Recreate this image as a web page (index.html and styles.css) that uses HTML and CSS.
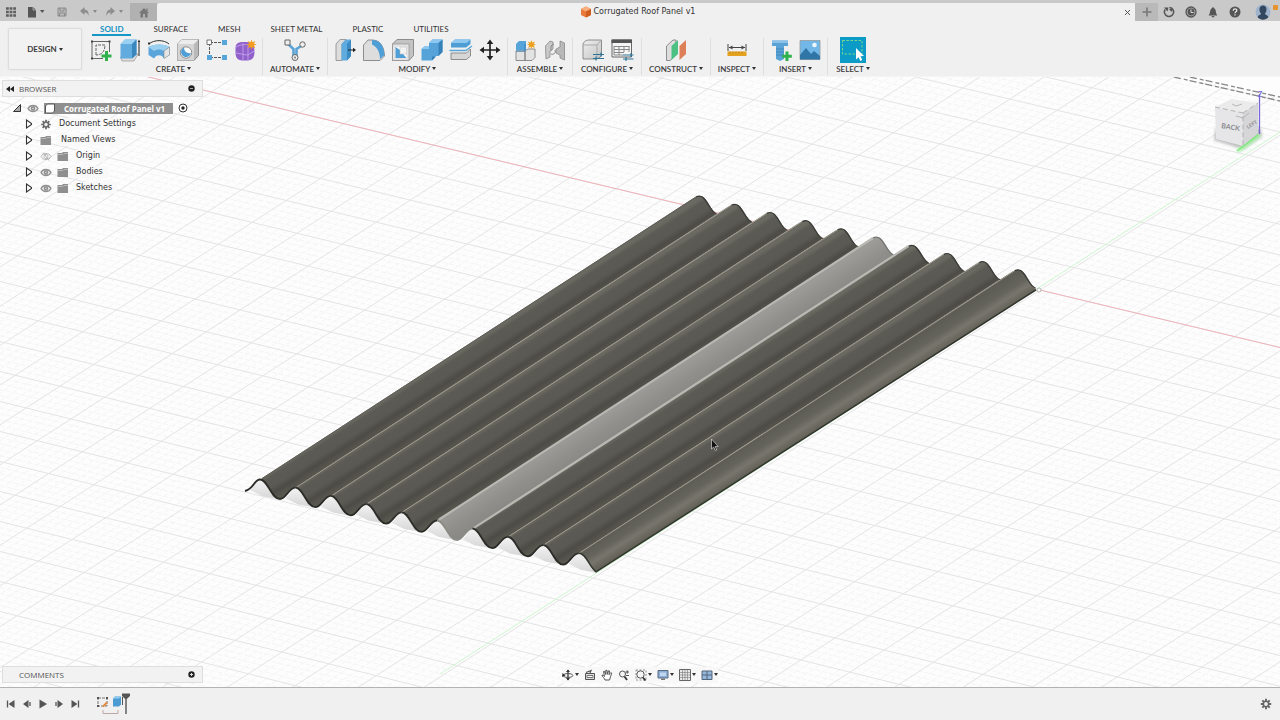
FILE: index.html
```html
<!DOCTYPE html>
<html lang="en">
<head>
<meta charset="utf-8">
<meta name="viewport" content="width=device-width, initial-scale=1">
<title>Corrugated Roof Panel v1</title>
<link rel="stylesheet" href="styles.css">
</head>
<body>
<svg class="defs" aria-hidden="true">
  <defs>
    <linearGradient id="greyFace" x1="0" y1="0" x2="1" y2="1"><stop offset="0" stop-color="#efefef"/><stop offset="1" stop-color="#c4c4c4"/></linearGradient>
    <symbol id="eye" viewBox="0 0 12 10"><path d="M1 5C3 1 9 1 11 5C9 9 3 9 1 5Z" fill="#e8e8e8" stroke="#909090" stroke-width="1.3"/><circle cx="6" cy="5" r="2.2" fill="#8c8c8c"/><circle cx="6" cy="5" r=".8" fill="#ddd"/></symbol>
    <symbol id="eye-off" viewBox="0 0 12 10"><path d="M1 5C3 1 9 1 11 5C9 9 3 9 1 5ZM3 1L9 9" fill="none" stroke="#b5b5b5"/><circle cx="6" cy="5" r="2" fill="none" stroke="#b5b5b5"/></symbol>
    <symbol id="folder" viewBox="0 0 12 10"><path d="M.5 1.500H5L6 .5H11V9.500H.5Z" fill="#8f8f8f"/><path d="M.5 3H6L7 2H11" fill="none" stroke="#c2c2c2" stroke-width=".8"/></symbol>
    <symbol id="twisty" viewBox="0 0 8 10"><path d="M1.500 1V9L6.500 5.500V4.500Z" fill="#fff" stroke="#333" stroke-width="1.1"/></symbol>
    <symbol id="gear" viewBox="0 0 12 12"><path d="M6 .8V11.200M.8 6H11.200M2.300 2.300L9.700 9.700M9.700 2.300L2.300 9.700" stroke="#666" stroke-width="1.9"/><circle cx="6" cy="6" r="3.400" fill="#666"/><circle cx="6" cy="6" r="1.900" fill="#efefef"/></symbol>
  </defs>
</svg>
<div class="app">
  <header class="titlebar">
    <div class="quick">
      <button aria-label="Data panel"><svg width="12" height="12" viewBox="0 0 12 12"><path d="M1 2.500H11M1 6H11M1 9.500H11" stroke="#5f5f5f" stroke-width="2.600" stroke-dasharray="2.800 .8"/></svg></button>
      <button class="q-file" aria-label="File"><svg width="18" height="12" viewBox="0 0 18 12"><path d="M1 1H6L9 4V11.500H1Z" fill="#555"/><path d="M6 1V4H9" fill="none" stroke="#bbb" stroke-width=".8"/><path d="M13 4H17.500L15.200 7Z" fill="#555"/></svg></button>
      <button class="q-save" aria-label="Save"><svg width="10" height="10" viewBox="0 0 10 10"><path d="M1 1H9V9H1Z" fill="#bbb" stroke="#8a8a8a"/><path d="M3 1V4H7V1M2.500 9V6H7.500V9" fill="none" stroke="#8a8a8a"/></svg></button>
      <button aria-label="Undo"><svg width="20" height="12" viewBox="0 0 20 12"><path d="M1 5L5.500 1V3.500C8.500 3.700 10 6 9.500 10.500C9 7.500 8 6.500 5.500 6.500V9Z" fill="#8e8e8e"/><path d="M14 4H18L16 7Z" fill="#888"/></svg></button>
      <button aria-label="Redo"><svg width="20" height="12" viewBox="0 0 20 12"><path d="M10 5L5.500 1V3.500C2.500 3.700 1 6 1.500 10.500C2 7.500 3 6.500 5.500 6.500V9Z" fill="#8e8e8e"/><path d="M14 4H18L16 7Z" fill="#888"/></svg></button>
    </div>
    <button class="home" aria-label="Home"><svg width="12" height="11" viewBox="0 0 12 11"><path d="M1 6L6 1L11 6H9.500V10.500H7V7H5V10.500H2.500V6Z" fill="#777"/><path d="M9 1.500V4" stroke="#777" stroke-width="1.300"/></svg></button>
    <div class="doc-tab">
      <div class="doc-name"><svg width="10" height="12" viewBox="0 0 10 12"><path d="M5 .5L10 3V9L5 11.500L0 9V3Z" fill="#e8793a"/><path d="M5 .5L10 3L5 5.500L0 3Z" fill="#f7ae7c"/><path d="M5 5.500L10 3V9L5 11.500Z" fill="#cf5d20"/></svg><span>Corrugated Roof Panel v1</span></div>
      <button class="close" aria-label="Close tab"><svg width="7" height="7" viewBox="0 0 7 7"><path d="M1 1L6 6M6 1L1 6" stroke="#555"/></svg></button>
    </div>
    <button class="new-tab" aria-label="New tab"><svg width="10" height="10" viewBox="0 0 10 10"><path d="M5 .5V9.500M.5 5H9.500" stroke="#777" stroke-width="1.600"/></svg></button>
    <div class="account">
      <button aria-label="Extensions"><svg width="12" height="12" viewBox="0 0 12 12"><path d="M2.200 3.500A4.500 4.500 0 1 0 9.800 3.500Q8.500 1.700 6.500 1.600" fill="none" stroke="#555" stroke-width="1.500"/><path d="M1 1.500H5.500L4.500 5.500ZM6 3L8.500 6L9.500 3Z" fill="#555"/></svg></button>
      <button aria-label="Job status"><svg width="12" height="12" viewBox="0 0 12 12"><circle cx="6" cy="6" r="5" fill="#aaa" stroke="#555" stroke-width="1.300"/><circle cx="6" cy="6" r="3.400" fill="#555"/><path d="M6 3.500V6.500H8.500" fill="none" stroke="#ddd"/></svg></button>
      <button aria-label="Notifications"><svg width="12" height="12" viewBox="0 0 12 12"><path d="M1.500 9.500C3.500 8 2.500 4 4.500 2.500L6 1L7.500 2.500C9.500 4 8.500 8 10.500 9.500ZM4.800 10H7.200V11.300H4.800Z" fill="#555"/></svg></button>
      <button aria-label="Help"><svg width="12" height="12" viewBox="0 0 12 12"><circle cx="6" cy="6" r="5.500" fill="#555"/><path d="M4.200 4.700C4.300 2.300 7.900 2.400 7.800 4.600C7.700 5.800 6.100 5.800 6 7.200M6 8.300V9.600" fill="none" stroke="#e6e6e6" stroke-width="1.300"/></svg></button>
      <button class="avatar" aria-label="Account"><svg width="24" height="18" viewBox="0 0 24 18"><circle cx="8" cy="9" r="7.500" fill="#9fb4cc"/><path d="M2.500 14C4 11.500 6 12 6 10.500C3.500 8 4 2.500 8 2.500C12 2.500 12.500 8 10 10.500C10 12 12 11.500 13.500 14C10.500 17.500 5.500 17.500 2.500 14Z" fill="#33475f"/><rect x="18" y="2" width="5" height="5" rx="1" fill="#e8922e"/></svg></button>
    </div>
  </header>

  <section class="ribbon" aria-label="Toolbar">
    <button class="workspace">DESIGN <i class="caret"></i></button>
    <div class="ribbon-main">
      <nav class="tabs">
        <button class="active">SOLID</button><button>SURFACE</button><button>MESH</button><button>SHEET METAL</button><button>PLASTIC</button><button>UTILITIES</button>
      </nav>
      <div class="groups">
        <div class="group">
          <div class="tools">
            <button aria-label="Create sketch"><svg viewBox="0 0 24 24"><path d="M3 3.500H20.500M3 3.500V20.500M20.500 3.500V14M3 20.500H14" fill="none" stroke="#555" stroke-width=".9"/><path d="M2 2.500h2v2h-2zM19.500 2.500h2v2h-2zM2 19.500h2v2h-2z" fill="#444"/><path d="M7 17V7H16C16 13 13 17 7 17" fill="none" stroke="#666" stroke-dasharray="3 1"/><path d="M17.500 13V23M12.500 18H22.500" stroke="#2fb24c" stroke-width="3"/></svg></button>
            <button aria-label="Extrude"><svg viewBox="0 0 24 24"><path d="M2.500 19L7 16H20L16 23H4Z" fill="#ddd" stroke="#888" stroke-width=".6"/><path d="M2.500 6L7 1.500H18.500V16.500L14 20.500H2.500Z" fill="#62abdf"/><path d="M2.500 6L7 1.500H18.500L14 6Z" fill="#9ad0f2"/><path d="M14 6L18.500 1.500V16.500L14 20.500Z" fill="#3a86be"/><path d="M21 3V18" stroke="#222"/><path d="M19.800 4L21 1.500L22.200 4Z" fill="#222"/></svg></button>
            <button aria-label="Revolve"><svg viewBox="0 0 24 24"><path d="M1.500 9C6 5.500 18 5.500 22.500 9V17L17 20.500C15 16 9 16 7 20.500L1.500 17Z" fill="#5aa6db"/><path d="M1.500 9C6 5.500 18 5.500 22.500 9L17 13C14 11 10 11 7 13Z" fill="#9bcff0"/><path d="M17 13L22.500 9V17L17 20.500Z" fill="#e5e5e5" stroke="#888" stroke-width=".6"/><path d="M2 6C7 1.500 17 1.500 22 6" fill="none" stroke="#333"/><path d="M1 4.500h2v2h-2z" fill="#333"/></svg></button>
            <button aria-label="Hole"><svg viewBox="0 0 24 24"><path d="M1.500 6L6 1.500H22.500V17.500L18 22.500H1.500Z" fill="#b9b9b9" stroke="#777" stroke-width=".8"/><path d="M1.500 6L6 1.500H22.500L18 6Z" fill="#ececec"/><path d="M1.500 6H18V22.500H1.500Z" fill="#d5d5d5"/><circle cx="10" cy="14.500" r="5.700" fill="#fafafa" stroke="#777" stroke-width=".8"/><path d="M8 9.500A5 5 0 1 0 15 15C11 16 8 13 8 9.500Z" fill="#4f9fd6"/></svg></button>
            <button aria-label="Pattern"><svg viewBox="0 0 24 24"><path d="M5 4.500H20M4.500 5V20M5 19.500H20" fill="none" stroke="#555" stroke-dasharray="3 1"/><path d="M2 2h4.500v4.500H2z" fill="#fff" stroke="#666" stroke-width=".9"/><path d="M17 2h5v5h-5zM2 17h5v5H2zM17 17h5v5h-5z" fill="#58a5da"/></svg></button>
            <button aria-label="Create form"><svg viewBox="0 0 24 24"><path d="M1.500 10C1.500 4 6 4 12 4C18 4 20 7 20.500 13C20.500 21 18 22.500 11 22.500C4 22.500 1.500 21 1.500 14Z" fill="#9060cb"/><path d="M2 9C7 6 14 6 19 8M2 15C7 16 12 17 14 17L20 13M9 5V22M14 8V22" fill="none" stroke="#c4a1ec" stroke-width=".9"/><path d="M17.500 1.500L18.400 4.300L21.300 3L20 5.700L22.800 6.500L20 7.500L21.300 10.200L18.400 9L17.500 11.700L16.500 9L13.700 10.200L15 7.500L12.200 6.500L15 5.700L13.700 3L16.500 4.300Z" fill="#f29d1f"/></svg></button>
          </div>
          <button class="menu">CREATE <i class="caret"></i></button>
        </div>
        <div class="group">
          <div class="tools"><button aria-label="Automated modeling"><svg viewBox="0 0 24 24"><path d="M4 5L10.500 11V18H13.500V11L20 7" fill="none" stroke="#5aa3d6" stroke-width="2.600"/><path d="M2 2h5v5H2z" fill="#eee" stroke="#666"/><circle cx="19.500" cy="6.500" r="2.700" fill="#eee" stroke="#666"/><circle cx="12" cy="19.500" r="3" fill="#eee" stroke="#666"/><circle cx="12" cy="19.500" r="1" fill="#777"/></svg></button></div>
          <button class="menu">AUTOMATE <i class="caret"></i></button>
        </div>
        <div class="group">
          <div class="tools">
            <button aria-label="Press pull"><svg viewBox="0 0 24 24"><path d="M3 6L7 1.500H13L9 6V22.500H3Z" fill="#ddd" stroke="#888" stroke-width=".8"/><path d="M8.500 6L13 1.500H18V18L14 22.500H8.500Z" fill="#5fabdf"/><path d="M14 6L18 1.500V18L14 22.500Z" fill="#3d8bc3"/><path d="M15 12H20.500" stroke="#222"/><path d="M20 9.800L23 12L20 14.200Z" fill="#222"/></svg></button>
            <button aria-label="Fillet"><svg viewBox="0 0 24 24"><path d="M1.500 7L6 2H10C18 2 22 8 22.500 18L18 22.500H1.500Z" fill="#ddd" stroke="#777" stroke-width=".8"/><path d="M10 2C18 2 22 8 22.500 17L18 21C18 14 15 9 10 6.500Z" fill="#4f9fd6"/></svg></button>
            <button aria-label="Shell"><svg viewBox="0 0 24 24"><path d="M1.500 6L6 1.500H22.500V17.500L18 22.500H1.500Z" fill="#c3c3c3" stroke="#777" stroke-width=".8"/><path d="M1.500 6H18V22.500H1.500Z" fill="#e3e3e3" stroke="#888" stroke-width=".6"/><path d="M4.500 9H15.500V20H4.500Z" fill="#fafafa"/><path d="M4.500 9V20H15.500L12 16H9V12Z" fill="#4f9fd6"/><path d="M9 9H15.500V16H9Z" fill="#f3f3f3" stroke="#bbb" stroke-width=".5"/></svg></button>
            <button aria-label="Combine"><svg viewBox="0 0 24 24"><path d="M9 5L12.500 1.500H22.500V14L18.500 18H15.500V19L12 22.500H1.500V11L5 8H9Z" fill="#56a3d9"/><path d="M9 5L12.500 1.500H22.500L18.500 5ZM1.500 11L5 8H9V11Z" fill="#8cc7ef"/><path d="M18.500 5L22.500 1.500V14L18.500 18ZM12 18.500H15.500V19L12 22.500Z" fill="#3681b9"/></svg></button>
            <button aria-label="Split body"><svg viewBox="0 0 24 24"><path d="M2 5L6 1.500H21.500V6L17 9.500H2Z" fill="#4e9dd4"/><path d="M2 5L6 1.500H21.500L17.500 5Z" fill="#8fc9ef"/><path d="M.5 12.500H17L23 8" fill="none" stroke="#58a5da" stroke-width="1.300"/><path d="M2 15H17.500L21.500 11V18L17.500 21.500H2Z" fill="#d6d6d6" stroke="#777" stroke-width=".8"/></svg></button>
            <button aria-label="Move"><svg viewBox="0 0 24 24"><path d="M12 4V20M4 12H20" stroke="#222" stroke-width="1.700"/><path d="M12 1.500L15.300 6H8.700ZM12 22.500L15.300 18H8.700ZM1.500 12L6 8.700V15.300ZM22.500 12L18 8.700V15.300Z" fill="#222"/></svg></button>
          </div>
          <button class="menu">MODIFY <i class="caret"></i></button>
        </div>
        <div class="group">
          <div class="tools">
            <button aria-label="New component"><svg viewBox="0 0 24 24"><path d="M2 6L5 3H12V12H2Z" fill="#57a4da"/><path d="M2 13H11V22.500H2ZM11 13L14 11H21V19.500L18 22.500H11Z" fill="#e3e3e3" stroke="#777" stroke-width=".8"/><path d="M2 13H11V6" fill="none" stroke="#3681b9"/><path d="M17.500 2L18.300 4.600L21 3.500L19.700 5.900L22 6.500L19.700 7.500L21 10L18.300 8.700L17.500 11L16.500 8.700L14 10L15.200 7.500L13 6.500L15.200 5.900L14 3.500L16.500 4.600Z" fill="#eda11f"/></svg></button>
            <button aria-label="Joint"><svg viewBox="0 0 24 24"><path d="M2.500 8L7 3L10 4V11L7 13V19L3 21Z" fill="#c9c9c9" stroke="#888" stroke-width=".8"/><path d="M8 13V8L11 6M8 16C11 17 13 15 12 12" fill="none" stroke="#888"/><path d="M21.500 5L17 3V9L13 11V15L17 17V20L21.500 22Z" fill="#b9b9b9" stroke="#888" stroke-width=".8"/></svg></button>
          </div>
          <button class="menu">ASSEMBLE <i class="caret"></i></button>
        </div>
        <div class="group">
          <div class="tools">
            <button aria-label="Configure"><svg viewBox="0 0 24 24"><path d="M2 7C2 4 5 2 8 2H20.500V18L16 21H2Z" fill="url(#greyFace)" stroke="#777" stroke-width=".8"/><path d="M16 21V7L20.500 2M2 7H16" fill="none" stroke="#aaa"/><path d="M12 16.500H23M12 20.500H23M20 14.500V18.500M15 18.500V22.500" stroke="#2d7597" stroke-width="1.200"/></svg></button>
            <button aria-label="Configuration table"><svg viewBox="0 0 24 24"><path d="M2 2H21.500V19H2Z" fill="#f5f5f5" stroke="#666"/><path d="M1.500 1.500H22V5H1.500Z" fill="#555"/><path d="M4 8.500H19.500M4 11.500H19.500M4 14.500H14M4 17H13M4 8V17M9 8V17M14 8V14M19 8V14" stroke="#888"/><path d="M13 17H23.500M13 21H23.500M21 15V19M16 19V23" stroke="#2d7597" stroke-width="1.200"/></svg></button>
          </div>
          <button class="menu">CONFIGURE <i class="caret"></i></button>
        </div>
        <div class="group">
          <div class="tools"><button aria-label="Offset plane"><svg viewBox="0 0 24 24"><path d="M2.500 8L9 2H12V17L6 22.500H2.500Z" fill="#ddd" stroke="#777" stroke-width=".8"/><path d="M7.500 8L14 2V16L7.500 22Z" fill="#4cc184"/><path d="M15.500 8L22 2V16L15.500 22Z" fill="#dd8058"/></svg></button></div>
          <button class="menu">CONSTRUCT <i class="caret"></i></button>
        </div>
        <div class="group">
          <div class="tools"><button aria-label="Measure"><svg viewBox="0 0 24 24"><path d="M3 6V13M21 6V13M4 9.500H20" stroke="#444"/><path d="M4 9.500L7.500 7.500V11.500ZM20 9.500L16.500 7.500V11.500Z" fill="#444"/><path d="M2.500 13.500H21.500V18H2.500Z" fill="#e5a21f"/><path d="M5 13.500V15.500M8 13.500V15.500M11 13.500V15.500M14 13.500V15.500M17 13.500V15.500" stroke="#b9831a" stroke-width=".8"/></svg></button></div>
          <button class="menu">INSPECT <i class="caret"></i></button>
        </div>
        <div class="group">
          <div class="tools">
            <button aria-label="Insert fastener"><svg viewBox="0 0 24 24"><path d="M3 2.500H19V8H15V21L11 23L7 21V8H3Z" fill="#5aa3d6"/><path d="M3 2.500H19V5H3Z" fill="#8cc2e8"/><path d="M7 11H15M7 14H15M7 17H15" stroke="#3b82b6" stroke-width=".8"/><path d="M18 13.500V23M13.200 18.200H22.800" stroke="#2fb24c" stroke-width="3"/></svg></button>
            <button aria-label="Canvas"><svg viewBox="0 0 24 24"><path d="M2 2.500H22V21.500H2Z" fill="#71b8e9" stroke="#999" stroke-width=".8"/><path d="M2 17L8 10L13 16L16 13L22 18V21.500H2Z" fill="#2f75a6"/><circle cx="16.500" cy="7" r="2.300" fill="#eef6fb"/></svg></button>
          </div>
          <button class="menu">INSERT <i class="caret"></i></button>
        </div>
        <div class="group">
          <div class="tools"><button class="select" aria-label="Select"><svg viewBox="0 0 26 26"><path d="M0 0H26V26H0Z" fill="#0c9bc7"/><path d="M2.500 3.500H22V17H2.500Z" fill="none" stroke="#78d78c" stroke-dasharray="2.500 1.500"/><path d="M16 11L24 19L20.500 19.300L22.300 23L20.300 24L18.600 20.300L16 22.500Z" fill="#fff"/></svg></button></div>
          <button class="menu">SELECT <i class="caret"></i></button>
        </div>
      </div>
    </div>
  </section>

  <main class="viewport">
    <svg class="scene" viewBox="0 77 1280 610" preserveAspectRatio="xMidYMid slice" role="img" aria-label="Corrugated roof panel model">
      <defs>
        <linearGradient id="steel" gradientUnits="userSpaceOnUse" x1="260" y1="479" x2="274" y2="501"><stop offset="0" stop-color="#6b6a62"/><stop offset=".15" stop-color="#5b5a54"/><stop offset=".5" stop-color="#5a5953"/><stop offset=".72" stop-color="#4d4b46"/><stop offset="1" stop-color="#595850"/></linearGradient>
        <linearGradient id="steelEdge" gradientUnits="userSpaceOnUse" x1="260" y1="479" x2="274" y2="501"><stop offset="0" stop-color="#5d5c55"/><stop offset=".35" stop-color="#65645c"/><stop offset=".6" stop-color="#77756c"/><stop offset="1" stop-color="#5d5b52"/></linearGradient>
        <linearGradient id="glow" gradientUnits="userSpaceOnUse" x1="260" y1="479" x2="274" y2="501"><stop offset="0" stop-color="#9c9b97"/><stop offset=".5" stop-color="#91908c"/><stop offset="1" stop-color="#898884"/></linearGradient>
        <linearGradient id="under" x1="0" y1="0" x2="0" y2="1"><stop offset="0" stop-color="#f3f3f3"/><stop offset="1" stop-color="#d6d6d6"/></linearGradient>
        <path id="strip" d="M260 479.500C268 479.500 271 499 280 499C286 499 289 487.700 295.400 487.700L716 214.500C710 209 707 196 700 196Q697 195.500 692 199Z"/>
        <path id="wave" d="M260 479.500C268 479.500 271 499 280 499C286 499 289 487.700 295.400 487.700"/>
        <path id="far" d="M696 197Q700 195 703 197.500C709 203 710 211 717 214.500"/>
        <path id="ridge" d="M262 478.500L696 197"/>
        <path id="shade" d="M250 490C255 486 256 479.500 260 479.500C268 479.500 270 495 278 499L262 496Z" fill="url(#under)"/>
      </defs>
      <rect y="77" width="1280" height="610" fill="#fdfdfd"/>
      <g id="grid-minor" class="grid-minor"></g>
      <g id="grid-major" class="grid-major"></g>
      <path d="M1172 77H1280V97Z" fill="#fdfdfd"/>
      <path d="M0 41.500L1036 289M1040 290L1280 347.500" stroke="#efb4b9" stroke-width="1"/>
      <path d="M440 674L1280 132" stroke="#cdf6cd" stroke-width="1"/>
      <path d="M1174 77L1280 101M1190 77L1280 97" stroke="#888" stroke-width="1.300" stroke-dasharray="7 3 4 2"/>
      <g id="panel"></g>
      <circle cx="1039" cy="290" r="2" fill="#fff" stroke="#999" stroke-width=".7"/>
      <path d="M711.500 439V449L713.700 447L715.300 450.500L716.700 449.800L715.200 446.500H718.200Z" fill="#111" stroke="#eee" stroke-width=".6"/>
    </svg>

    <section class="browser">
      <div class="panel-head"><button aria-label="Collapse"><svg width="8" height="6" viewBox="0 0 8 6"><path d="M4 0V6L0 3ZM8 0V6L4 3Z" fill="#222"/></svg></button><span>BROWSER</span><button aria-label="Hide browser"><svg width="7" height="7" viewBox="0 0 7 7"><circle cx="3.500" cy="3.500" r="3.200" fill="#222"/><path d="M2 3.500H5" stroke="#aaa"/></svg></button></div>
      <ul class="tree">
        <li class="root"><svg width="10" height="10" viewBox="0 0 10 10"><path d="M8.500 1.500V8.500H1.500Z" fill="#aaa" stroke="#333"/></svg><svg class="ic"><use href="#eye"/></svg><span class="doc"><svg width="12" height="11" viewBox="0 0 12 11"><path d="M1.500 3L3.500 1H10.500V8L8.500 10H1.500Z" fill="#fff" stroke="#555"/></svg><b>Corrugated Roof Panel v1</b></span><svg width="10" height="10" viewBox="0 0 10 10"><circle cx="5" cy="5" r="4" fill="#fff" stroke="#333"/><circle cx="5" cy="5" r="1.700" fill="#222"/></svg></li>
        <li><svg class="tw"><use href="#twisty"/></svg><svg class="ic"><use href="#gear"/></svg><span class="label">Document Settings</span></li>
        <li><svg class="tw"><use href="#twisty"/></svg><svg class="ic folder"><use href="#folder"/></svg><span class="label">Named Views</span></li>
        <li><svg class="tw"><use href="#twisty"/></svg><svg class="ic"><use href="#eye-off"/></svg><svg class="ic"><use href="#folder"/></svg><span class="label">Origin</span></li>
        <li><svg class="tw"><use href="#twisty"/></svg><svg class="ic"><use href="#eye"/></svg><svg class="ic"><use href="#folder"/></svg><span class="label">Bodies</span></li>
        <li><svg class="tw"><use href="#twisty"/></svg><svg class="ic"><use href="#eye"/></svg><svg class="ic"><use href="#folder"/></svg><span class="label">Sketches</span></li>
      </ul>
    </section>

    <svg class="cube" width="80" height="76" viewBox="1200 84 80 76" role="img" aria-label="View cube">
      <defs><filter id="soft"><feGaussianBlur stdDeviation="1.500"/></filter></defs>
      <path d="M1214 140L1243 149L1262 136L1260 128H1216Z" fill="#bbb" filter="url(#soft)"/>
      <path d="M1238 151L1260 135" stroke="#a8f2a8" stroke-width="4" filter="url(#soft)"/>
      <path d="M1215 107L1232 99L1258 103L1243 113Z" fill="#ebebeb"/>
      <path d="M1215 107L1243 113V146L1216 139Z" fill="#e6e6e8"/>
      <path d="M1243 113L1258 103V133L1243 146Z" fill="#d6d6d9"/>
      <path d="M1215 107L1243 113V146M1243 113L1258 103" fill="none" stroke="#a5a5a5" stroke-width=".8" stroke-dasharray="5 3"/>
      <path d="M1232 104L1236 106L1242 104M1236 116L1243 118L1249 113" fill="none" stroke="#aaa" stroke-width=".8"/>
      <path d="M1259.500 94V134" stroke="#7464d4" stroke-width="1.300"/>
      <path d="M1237 151L1258 135" stroke="#7be87b" stroke-width="1.200"/>
      <text x="1221" y="128" class="face" transform="rotate(9 1221 128)">BACK</text>
      <text x="1248" y="129" class="face side" transform="rotate(-32 1248 129)">LEFT</text>
      <text x="1258" y="97" class="axis">Z</text>
    </svg>

    <div class="view-foot">
      <section class="comments panel-head"><span>COMMENTS</span><button aria-label="Add comment"><svg width="7" height="7" viewBox="0 0 7 7"><circle cx="3.500" cy="3.500" r="3.200" fill="#222"/><path d="M2 3.500H5M3.500 2V5" stroke="#ddd"/></svg></button></section>
      <nav class="navbar" aria-label="Navigation">
        <button aria-label="Orbit"><svg width="12" height="12" viewBox="0 0 12 12"><path d="M6 1V11" stroke="#333" stroke-width="1.300"/><ellipse cx="6" cy="6.500" rx="4.800" ry="2" fill="none" stroke="#555"/><path d="M4 3L6 .5L8 3ZM4 9L6 11.500L8 9ZM.5 4L3.500 6.500L0 8Z" fill="#333"/></svg><i class="caret"></i></button>
        <button aria-label="Look at"><svg width="12" height="12" viewBox="0 0 12 12"><path d="M1.500 4.500H10.500V10.500H1.500Z" fill="#ddd" stroke="#555"/><path d="M3 6.500H9V8.500H3Z" fill="#fff" stroke="#777"/><path d="M2 3.500L7 1.500L6 4" fill="none" stroke="#555" stroke-width="1.200"/></svg></button>
        <button aria-label="Pan"><svg width="12" height="12" viewBox="0 0 12 12"><path d="M4 11C3.500 9 1 7.500 1 6L2.500 6.500L3.500 7.500L2.500 2.500L3.500 2.300L4.700 5.500L4.800 1.300H6L6.300 5.300L7.500 1.700L8.500 2L8 5.700L9.800 3.500L10.700 4.200C9.500 6.500 9.500 9 8.500 11Z" fill="#fff" stroke="#444" stroke-width=".9"/></svg></button>
        <button aria-label="Zoom"><svg width="12" height="12" viewBox="0 0 12 12"><circle cx="4.500" cy="5" r="3" fill="#f5f5f5" stroke="#555"/><path d="M6.500 7.500L9 11" stroke="#333" stroke-width="1.800"/><path d="M7.500 3H11M9.200 1.300V4.700M8 6.500H11" stroke="#444" stroke-width=".9"/></svg></button>
        <button aria-label="Fit"><svg width="12" height="12" viewBox="0 0 12 12"><path d="M1 1H11V11H1Z" fill="none" stroke="#777" stroke-width=".8" stroke-dasharray="2 1.500"/><circle cx="5.500" cy="5.500" r="3.700" fill="#f5f5f5" stroke="#555"/><path d="M8 8.500L10.500 11.500" stroke="#333" stroke-width="1.800"/></svg><i class="caret"></i></button>
        <button aria-label="Display settings"><svg width="12" height="12" viewBox="0 0 12 12"><path d="M1 1.500H11V9H1Z" fill="#8aaed6" stroke="#5a6a80"/><path d="M3 3.500H9V7H3Z" fill="#c0d7ef"/><path d="M4 9.500H8V11H4Z" fill="#777"/></svg><i class="caret"></i></button>
        <button aria-label="Grid settings"><svg width="12" height="12" viewBox="0 0 12 12"><path d="M.5 .5H11.500V11.500H.5Z" fill="#e9e9e9" stroke="#666"/><path d="M3.500 1V11M6 1V11M8.500 1V11M1 3.500H11M1 6H11M1 8.500H11" stroke="#777" stroke-width=".6"/></svg><i class="caret"></i></button>
        <button aria-label="Viewports"><svg width="12" height="12" viewBox="0 0 12 12"><path d="M1 2H11V10.500H1Z" fill="#94b7dc" stroke="#55657a"/><path d="M6 2V10.500M1 6H11" stroke="#55657a"/></svg><i class="caret"></i></button>
      </nav>
    </div>
  </main>

  <footer class="timeline">
    <div class="playback">
      <button aria-label="Go to start"><svg width="10" height="10" viewBox="0 0 10 10"><path d="M1.500 1.500V8.500" stroke="#555" stroke-width="1.300"/><path d="M8.500 1V9L2.500 5Z" fill="#555"/></svg></button>
      <button aria-label="Step back"><svg width="10" height="10" viewBox="0 0 10 10"><path d="M6.500 1V9L1 5Z" fill="#555"/><path d="M8 3V7" stroke="#555" stroke-width="1.300"/></svg></button>
      <button aria-label="Play"><svg width="10" height="10" viewBox="0 0 10 10"><path d="M1.500 .5V9.500L9 5Z" fill="#555"/></svg></button>
      <button aria-label="Step forward"><svg width="10" height="10" viewBox="0 0 10 10"><path d="M3.500 1V9L9 5Z" fill="#555"/><path d="M2 3V7" stroke="#555" stroke-width="1.300"/></svg></button>
      <button aria-label="Go to end"><svg width="10" height="10" viewBox="0 0 10 10"><path d="M1.500 1V9L7.500 5Z" fill="#555"/><path d="M8.500 1.500V8.500" stroke="#555" stroke-width="1.300"/></svg></button>
    </div>
    <svg class="features" width="36" height="24" viewBox="0 0 36 24" role="img" aria-label="Sketch and extrude features"><path d="M2 5H11V13H2Z" fill="none" stroke="#777" stroke-dasharray="3 1"/><path d="M1 4h2v2H1zM10 4h2v2h-2zM1 12h2v2H1z" fill="#555"/><path d="M7 13.500L11 9.500" stroke="#e88b3c" stroke-width="2"/><path d="M17 5.500L19 3.500H25V11.500L23 13.500H17Z" fill="#4c9cd3"/><path d="M17 5.500L19 3.500H25L23 5.500Z" fill="#94cbf0"/><path d="M26.500 4V12" stroke="#555"/><path d="M7 17V20.500H22V17" fill="none" stroke="#bda9a9"/><path d="M26 .5H34V3L30.800 6H29.200L26 3Z" fill="#555"/><path d="M30 5V21" stroke="#555" stroke-width="1.400"/></svg>
    <button class="settings" aria-label="Timeline settings"><svg width="12" height="12"><use href="#gear"/></svg></button>
  </footer>
</div>
<script src="scene.js"></script>
</body>
</html>
```
FILE: styles.css
```css
* { box-sizing: border-box; }
body { margin: 0; background: #f0f0f0; color: #3c3c3c; font: 8px/12px Lato, "Open Sans", sans-serif; }
button { margin: 0; padding: 0; border: 0; background: none; color: inherit; font: inherit; display: flex; align-items: center; justify-content: center; }
svg { display: block; flex: none; }
.defs { position: absolute; width: 0; height: 0; }
.app { display: flex; flex-direction: column; min-height: 100vh; }

.caret { display: inline-block; border: 2px solid transparent; border-top: 3px solid #333; border-bottom: 0; margin-left: 2px; }

.titlebar { display: flex; align-items: stretch; height: 21px; padding-top: 3px; background: #c9c9c9; }
.quick { display: flex; align-items: center; gap: 6px; width: 130px; padding-left: 5px; }
.q-file { margin-left: 4px; }
.q-save { margin: 0 6px; }
.home { width: 27px; background: #b1b1b1; }
.doc-tab { flex: 1; display: flex; align-items: center; background: #f0f0f0; border-radius: 3px 0 0 0; font: 8px/12px "DejaVu Sans", sans-serif; color: #333; }
.doc-name { flex: 1; display: flex; align-items: center; justify-content: center; gap: 3px; }
.close { width: 16px; align-self: stretch; }
.new-tab { width: 23px; background: #b9b9b9; }
.account { display: flex; align-items: center; gap: 10px; padding: 0 1px 0 5px; }
.avatar { margin-left: 4px; }

.ribbon { display: flex; height: 56px; background: #f0f0f0; border-bottom: 1px solid #f5f5f5; }
.workspace { width: 74px; height: 42px; margin: 7px 8px 0 8px; border: 1px solid #dcdcdc; border-radius: 2px; background: #f2f2f2; font-weight: bold; box-shadow: 0 0 2px #ddd; }
.ribbon-main { flex: 1; min-width: 0; }
.tabs { display: flex; gap: 30px; height: 15px; padding-left: 10px; }
.tabs button { position: relative; color: #333; }
.tabs .active { color: #1590c0; font-weight: bold; }
.tabs .active::after { content: ""; position: absolute; left: -8px; right: -8px; bottom: 0; height: 2px; background: #1797c5; }
.groups { display: grid; grid-template-columns: 173px 65px 180px 65px 69px 69px 53px 64px 50px; padding-top: 2px; }
.group { display: flex; flex-direction: column; align-items: center; border-right: 1px solid #dedede; }
.group:first-child { padding-right: 5px; }
.group:last-child { border-right: 0; }
.tools { display: flex; gap: 5px; height: 24px; align-items: center; }
.tools svg { width: 24px; height: 24px; }
.tools .select svg { width: 26px; height: 26px; }
.menu { font-weight: 600; color: #3a3a3a; height: 13px; white-space: nowrap; }

.viewport { position: relative; flex: 1; display: flex; flex-direction: column; justify-content: space-between; min-height: 320px; overflow: hidden; border-bottom: 1px solid #b3b3b3; }
.scene { position: absolute; inset: 0; width: 100%; height: 100%; }
.grid-major { stroke: #e4e4e6; stroke-width: 1; }
.grid-minor { stroke: #f5f5f7; stroke-width: 1; stroke-dasharray: 5 2; }
.browser, .view-foot { position: relative; }
.browser { width: 203px; padding-top: 3px; }
.panel-head { display: flex; align-items: center; height: 17px; padding: 0 7px 0 3px; margin-left: 2px; background: #f2f2f2; border: 1px solid #dedede; color: #555; font-family: "Open Sans", sans-serif; font-size: 8px; }
.panel-head span { flex: 1; padding-left: 5px; }
.tree { list-style: none; margin: 3px 0 0; padding: 0; font: 8px/16px "DejaVu Sans", sans-serif; color: #333; }
.tree li { display: flex; align-items: center; height: 16px; padding-left: 25px; }
.tree .root { padding-left: 12px; gap: 5px; }
.tree .tw { width: 8px; height: 10px; margin-right: 7px; }
.ic { width: 12px; height: 11px; margin-right: 5px; }
.root .ic { margin: 0; }
.folder { margin-right: 7px; }
.label { padding: 0 5px 0 2px; background: #f9f9f9; line-height: 12px; }
.doc { display: flex; align-items: center; gap: 8px; height: 11px; padding-right: 8px; background: #8f8f8f; color: #fff; font-family: "Open Sans", sans-serif; line-height: 11px; }
.cube { position: absolute; top: 7px; right: 0; }
.face { font: bold 7px Lato, sans-serif; fill: #8a8a8e; }
.side { font-size: 5px; }
.axis { font: bold 7px Lato, sans-serif; fill: #7464d4; }
.view-foot { display: grid; grid-template-columns: 1fr auto 1fr; align-items: center; padding-bottom: 4px; }
.comments { width: 201px; padding-left: 11px; }
.navbar { display: flex; align-items: center; gap: 5px; height: 16px; background: #f8f8f8; }
.navbar .caret { margin-left: 1px; }

.timeline { display: flex; align-items: center; height: 32px; padding: 0 8px 0 6px; background: #f0f0f0; }
.playback { display: flex; gap: 6px; }
.features { margin: 2px 0 0 16px; }
.settings { margin-left: auto; }
```
FILE: scene.js
```js
const NS = "http://www.w3.org/2000/svg";

function add(parent, tag, attrs) {
  const el = document.createElementNS(NS, tag);
  for (const [k, v] of Object.entries(attrs)) el.setAttribute(k, v);
  parent.appendChild(el);
  return el;
}

const major = document.getElementById("grid-major");
const minor = document.getElementById("grid-minor");

// Ground plane: lines parallel to the red axis, then lines parallel to the green axis.
for (let n = -60; n <= 110; n++) {
  const k = n / 5;
  add(n % 5 ? minor : major, "line", { x1: 0, y1: 41.5 + 30 * k, x2: 1280, y2: 347.5 + 30.8 * k });
}
for (let n = -150; n <= 100; n++) {
  const k = n / 5;
  const x = 1040 + 48.2 * k + 0.12 * k * k;
  const y = 290 + 0.239 * (x - 1040);
  add(n % 5 ? minor : major, "line", { x1: x - 1200, y1: y + 774, x2: x + 1200, y2: y - 774 });
}

// Corrugations, drawn back to front.
const panel = document.getElementById("panel");
const COUNT = 10;
const LIGHT = 5;
for (let i = 0; i < COUNT; i++) {
  const move = `translate(${35.4 * i} ${8.2 * i})`;
  add(panel, "use", { href: "#shade", transform: move });
}
add(panel, "path", { d: "M245 491C254 489 254 479.500 260 479.500", fill: "none", stroke: "#2b2b28", "stroke-width": 2 });
for (let i = 0; i < COUNT; i++) {
  const g = add(panel, "g", { transform: `translate(${35.4 * i} ${8.2 * i})` });
  const light = i === LIGHT;
  if (i === COUNT - 1) {
    add(g, "path", { d: "M260 479.500C268 479.500 271 494 277.500 498L717.500 216C710 209 707 196 700 196Q697 195.500 692 199Z", fill: "url(#steelEdge)" });
    add(g, "path", { d: "M260 479.500C268 479.500 271 494 277.500 498L717.500 216", fill: "none", stroke: "#30352c", "stroke-width": 1.5 });
  } else {
    add(g, "use", { href: "#strip", fill: light ? "url(#glow)" : "url(#steel)" });
    add(g, "use", { href: "#wave", fill: "none", stroke: light ? "#8b8b86" : "#2b2b28", "stroke-width": 1.8 });
  }
  add(g, "use", { href: "#far", fill: "none", stroke: light ? "#777772" : "#3a3a36", "stroke-width": 1.2 });
  const wide = light || i === LIGHT + 1;
  add(g, "use", { href: "#ridge", stroke: wide ? "#b9b9b3" : i ? "#9b988a" : "#5f5e57", "stroke-width": wide ? 2.2 : 1 });
}
```
